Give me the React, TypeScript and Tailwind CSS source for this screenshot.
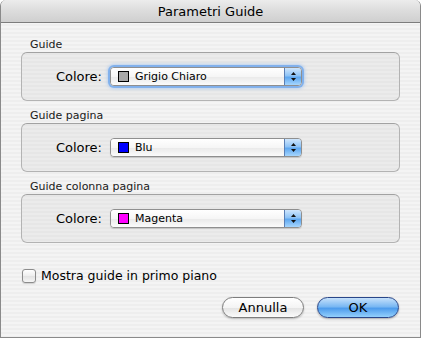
import React from 'react';

const stripes =
  'bg-[repeating-linear-gradient(to_bottom,#eeeeee_0px,#eeeeee_2px,#f4f4f4_2px,#f4f4f4_4px)]';

const PopupArrows: React.FC = () => (
  <svg width="7" height="11" viewBox="0 0 7 11">
    <path d="M3.5 1 L6 4 L1 4 Z" fill="#111" />
    <path d="M1 7 L6 7 L3.5 10 Z" fill="#111" />
  </svg>
);

const Popup: React.FC<{ swatch: string; label: string; focused?: boolean }> = ({ swatch, label, focused }) => (
  <div
    className={`flex h-[19px] w-[192px] rounded-[4px] border border-[#8f8f8f] overflow-hidden ${
      focused ? 'shadow-[0_0_0_2px_rgba(110,165,235,0.75),0_0_3px_3px_rgba(140,185,245,0.5)]' : 'shadow-[0_1px_1px_rgba(0,0,0,0.15)]'
    }`}
  >
    <div className="flex flex-1 items-center gap-[6px] pl-[7px] bg-[linear-gradient(to_bottom,#ffffff_0%,#f6f6f6_50%,#e9e9e9_51%,#fbfbfb_100%)]">
      <span className="h-[11px] w-[11px] border border-black" style={{ backgroundColor: swatch }} />
      <span className="text-[11px] leading-none text-black">{label}</span>
    </div>
    <div className="flex w-[17px] items-center justify-center border-l border-[#5a7fb5] bg-[linear-gradient(to_bottom,#cfe6fd_0%,#8ec3f6_45%,#5ea7f0_55%,#a6d6fe_100%)]">
      <PopupArrows />
    </div>
  </div>
);

const Section: React.FC<{ title: string; swatch: string; label: string; focused?: boolean; first?: boolean }> = ({
  title,
  swatch,
  label,
  focused,
  first,
}) => (
  <div className={first ? '' : 'mt-[8px]'}>
    <div className="h-[14px] pl-[9px] text-[11px] leading-[14px] text-[#1a1a1a]">{title}</div>
    <div className="flex h-[49px] items-center rounded-[6px] border border-[#b3b3b3] border-t-[#a2a2a2] bg-[repeating-linear-gradient(to_bottom,#e6e6e6_0px,#e6e6e6_2px,#ebebeb_2px,#ebebeb_4px)]">
      <div className="w-[80px] text-right text-[13px] leading-none text-black">Colore:</div>
      <div className="ml-[8px]">
        <Popup swatch={swatch} label={label} focused={focused} />
      </div>
    </div>
  </div>
);

export default function App() {
  return (
    <div className="h-[338px] w-[421px] bg-white font-['DejaVu_Sans',sans-serif]">
      <div className={`flex h-[338px] w-[421px] flex-col overflow-hidden rounded-t-[6px] border-x border-b border-[#8a8a8a] ${stripes}`}>
        <div className="flex h-[23px] shrink-0 items-center justify-center border-b border-[#7c7c7c] bg-[linear-gradient(to_bottom,#ececec_0%,#dcdcdc_50%,#cfcfcf_100%)]">
          <span className="text-[13px] leading-none text-black">Parametri Guide</span>
        </div>

        <div className="px-[20px] pt-[15px]">
          <Section first title="Guide" swatch="#a8a8a8" label="Grigio Chiaro" focused />
          <Section title="Guide pagina" swatch="#0000ff" label="Blu" />
          <Section title="Guide colonna pagina" swatch="#ff00ff" label="Magenta" />

          <label className="mt-[25px] flex h-[16px] items-center gap-[5px] pl-[1px]">
            <span className="h-[14px] w-[14px] rounded-[3px] border border-[#8c8c8c] bg-[linear-gradient(to_bottom,#ffffff_0%,#eeeeee_50%,#e2e2e2_51%,#f6f6f6_100%)] shadow-[0_1px_1px_rgba(0,0,0,0.15)]" />
            <span className="text-[12.5px] leading-none text-black">Mostra guide in primo piano</span>
          </label>

          <div className="mt-[13px] flex justify-end gap-[13px] pr-[1px]">
            <button className="flex h-[21px] w-[82px] items-center justify-center rounded-full border border-[#7d7d7d] bg-[linear-gradient(to_bottom,#ffffff_0%,#f4f4f4_50%,#e3e3e3_52%,#fbfbfb_100%)] text-[13px] leading-none text-black shadow-[0_1px_2px_rgba(0,0,0,0.25)]">
              Annulla
            </button>
            <button className="flex h-[21px] w-[82px] items-center justify-center rounded-full border border-[#29478a] bg-[linear-gradient(to_bottom,#c6e1fb_0%,#7ab8f3_45%,#4e9cec_55%,#93d0fc_100%)] text-[13px] leading-none text-black shadow-[0_1px_2px_rgba(0,0,0,0.3)]">
              OK
            </button>
          </div>
        </div>
      </div>
    </div>
  );
}
